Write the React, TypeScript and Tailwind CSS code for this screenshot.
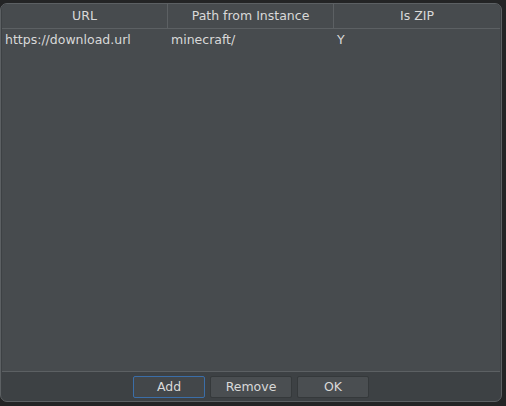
import React from 'react';

const columns = ['URL', 'Path from Instance', 'Is ZIP'];
const rows = [['https://download.url', 'minecraft/', 'Y']];

export default function App() {
  return (
    <div
      className="w-[506px] h-[406px] bg-[#232425] pt-[3px] pr-[4px] pb-[4px] text-[#d9d9d9] text-[12.5px]"
      style={{ fontFamily: '"DejaVu Sans", sans-serif' }}
    >
      <div className="h-full flex flex-col rounded-[7px] border border-[#5c6063] bg-[#3d4144] overflow-hidden">
        <div className="flex-1 flex flex-col bg-[#474b4e] border-b border-[#5c6063] mx-[1px]">
          <div className="flex h-[25px] border-b border-[#5c6063]">
            {columns.map((c, i) => (
              <div
                key={c}
                className={`flex items-center justify-center pt-[1px] ${i === 2 ? 'flex-1' : 'w-[166px] border-r border-[#5c6063]'}`}
              >
                {c}
              </div>
            ))}
          </div>
          {rows.map((r, ri) => (
            <div key={ri} className="flex h-[22px] items-center">
              {r.map((v, i) => (
                <div key={i} className={`pl-[3px] ${i === 2 ? 'flex-1' : 'w-[166px]'}`}>
                  {v}
                </div>
              ))}
            </div>
          ))}
        </div>
        <div className="h-[29px] flex items-start justify-center gap-[5px] pt-[4px]">
          <button className="w-[72px] h-[22px] rounded-[2px] border border-[#3b6ea8] bg-[#43474a]">Add</button>
          <button className="w-[82px] h-[22px] rounded-[2px] border border-[#35393b] bg-[#4a4e51]">Remove</button>
          <button className="w-[72px] h-[22px] rounded-[2px] border border-[#35393b] bg-[#4a4e51]">OK</button>
        </div>
      </div>
    </div>
  );
}
